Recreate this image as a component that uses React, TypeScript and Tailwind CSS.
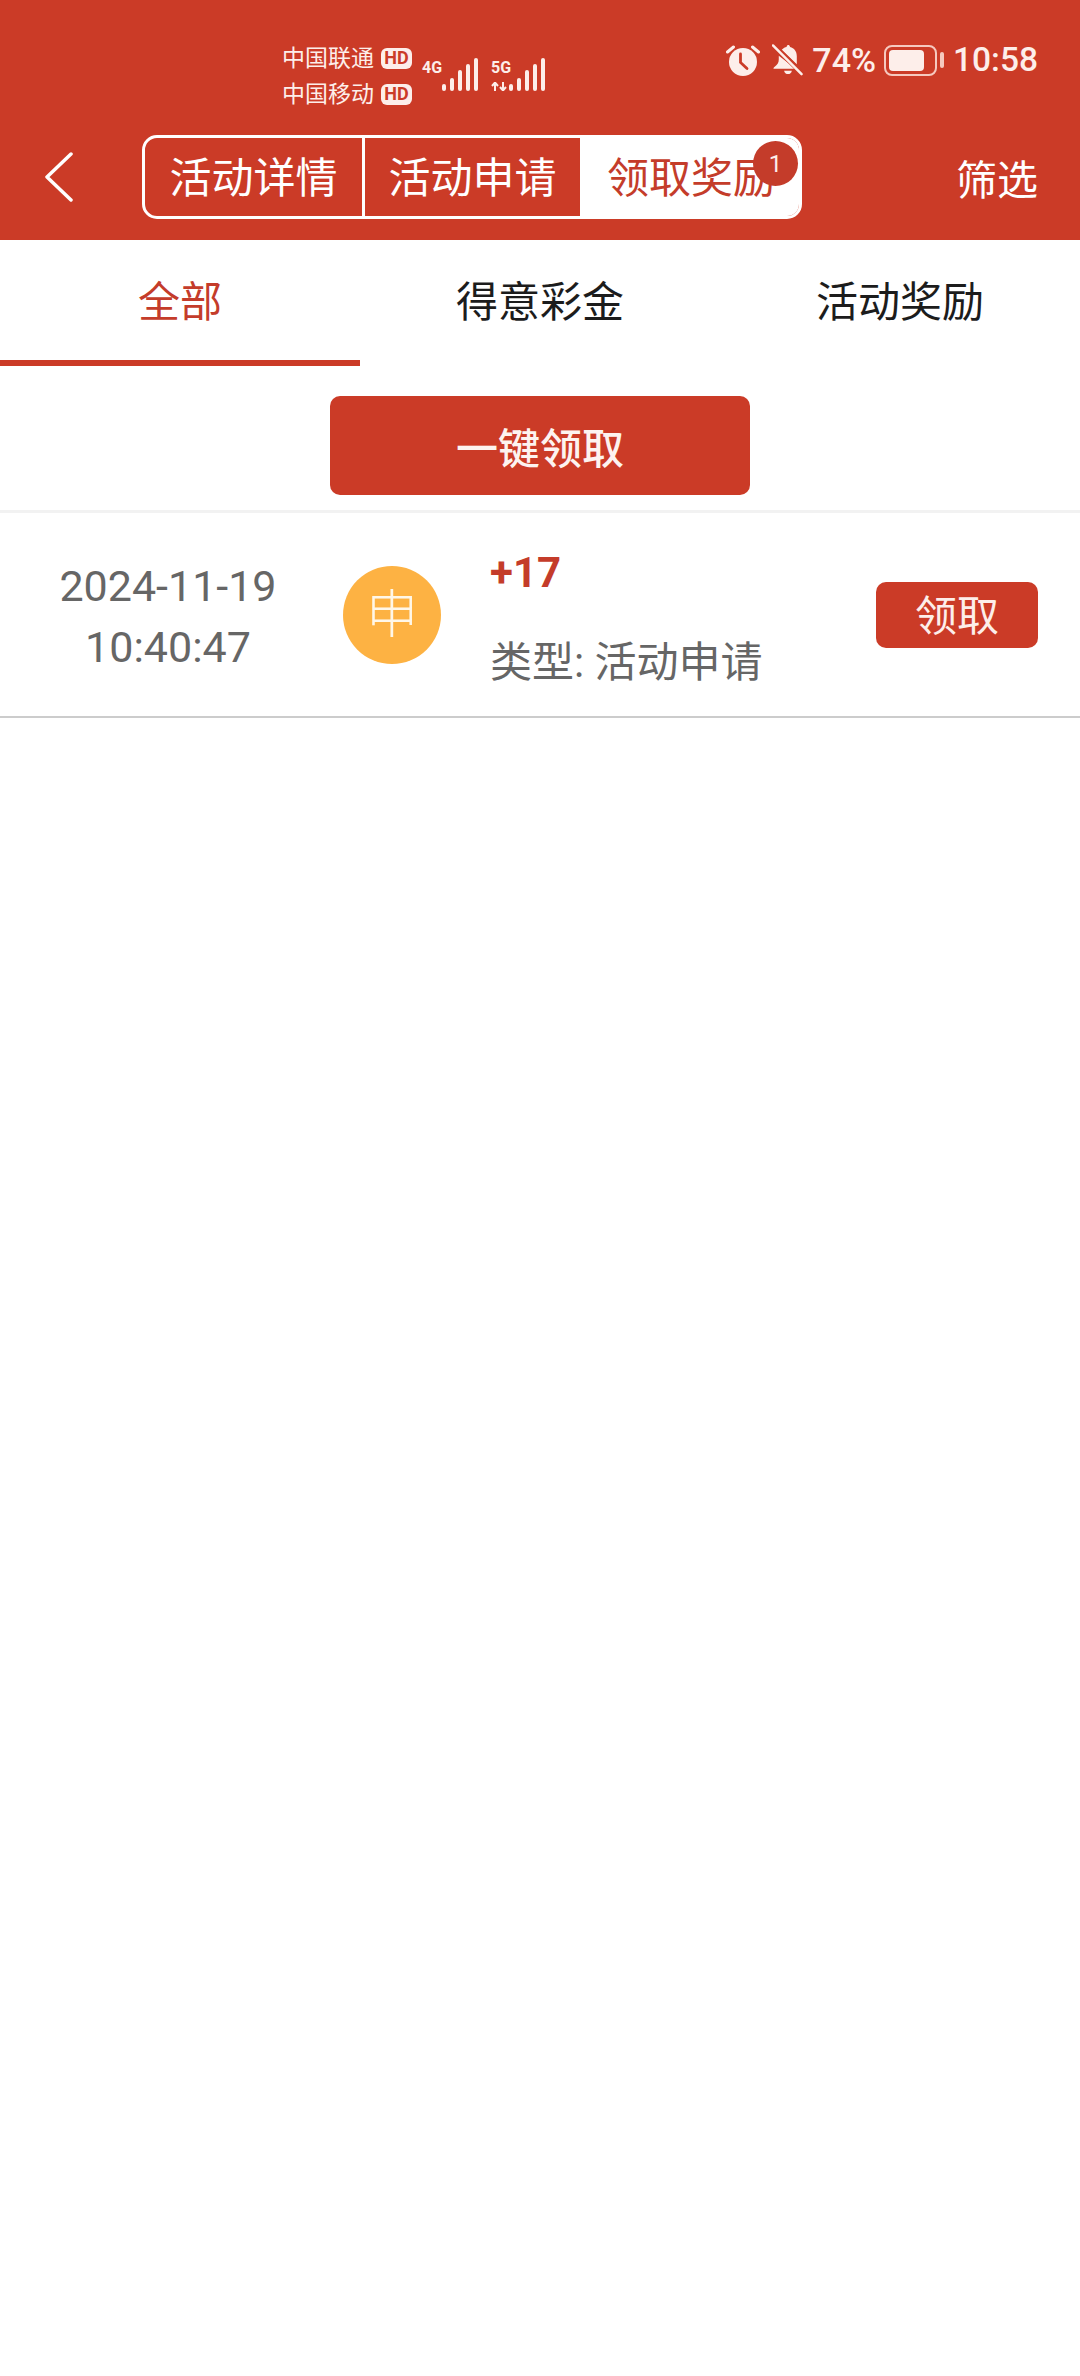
const fontStack = { fontFamily: 'Roboto, "Noto Sans CJK SC", sans-serif' };

function SignalBars() {
  const heights = [7, 13, 21, 27, 33];
  return (
    <div className="flex items-end gap-[4px]">
      {heights.map((h, i) => (
        <div key={i} className="w-[4px] rounded-full bg-[#fdeeea]" style={{ height: h }} />
      ))}
    </div>
  );
}

function HdBadge() {
  return (
    <span className="ml-[7px] flex h-[21px] w-[31px] items-center justify-center rounded-[6px] bg-[#fdeeea] text-[18px] leading-none font-bold text-[#cb3b27]">
      HD
    </span>
  );
}

function DataArrows() {
  return (
    <svg width="17" height="9" viewBox="0 0 17 9" className="text-[#fdeeea]">
      <path d="M4 9V1M1 4l3-3.500L7 4" fill="none" stroke="currentColor" strokeWidth="2" />
      <path d="M12 0v8M9 5l3 3.500L15 5" fill="none" stroke="currentColor" strokeWidth="2" />
    </svg>
  );
}

function AlarmIcon() {
  return (
    <svg width="34" height="31" viewBox="0 0 34 31" className="text-[#fdeeea]">
      <circle cx="17" cy="17" r="14" fill="currentColor" />
      <path d="M14.500 9v8.500l6.500 6" fill="none" stroke="#cb3b27" strokeWidth="2.800" strokeLinecap="round" />
      <path d="M1.500 7 7.500 2M32.500 7 26.500 2" fill="none" stroke="currentColor" strokeWidth="3" strokeLinecap="round" />
    </svg>
  );
}

function MutedBellIcon() {
  return (
    <svg width="31" height="32" viewBox="0 0 32 32" className="text-[#fdeeea]">
      <path
        d="M7 11.500 24.500 25H1.500c0-1 .6-1.600 1.600-2.400C5.600 20.400 7 19 7 15.500ZM10 5.500C11.800 3.500 13.500 2.800 15 2.500 15.400 1 16 .5 16.800.5s1.500.5 1.800 2c4.300 1 7 4.500 7 9.500v8.500Z"
        fill="currentColor"
      />
      <path d="M12.500 27h8c-.4 2.200-2 3.500-4 3.500s-3.600-1.300-4-3.500Z" fill="currentColor" />
      <path d="M2.500 1.500 31 30" stroke="#cb3b27" strokeWidth="5" />
      <path d="M1 1 30.500 30.500" stroke="currentColor" strokeWidth="2.600" strokeLinecap="round" />
    </svg>
  );
}

function BatteryIcon() {
  return (
    <div className="flex items-center gap-[3px]">
      <div className="flex h-[31px] w-[53px] items-center rounded-[8px] border-[2px] border-[#f6c9bf] p-[3px]">
        <div className="h-full w-[35px] rounded-[4px] bg-[#fdeeea]" />
      </div>
      <div className="h-[16px] w-[4px] rounded-full bg-[#f6c9bf]" />
    </div>
  );
}

function StatusBar() {
  return (
    <div className="flex h-[120px] items-center pr-[42px] pl-[282px] text-[#fdeeea]">
      <div className="mt-[32px] flex flex-col gap-[10px]">
        <div className="flex h-[26px] items-center text-[23px] leading-none">
          中国联通
          <HdBadge />
        </div>
        <div className="flex h-[26px] items-center text-[23px] leading-none">
          中国移动
          <HdBadge />
        </div>
      </div>
      <div className="mt-[29px] ml-[10px] flex h-[33px] items-start">
        <span className="mt-[2px] w-[20px] text-[16px] leading-none font-bold">4G</span>
        <SignalBars />
      </div>
      <div className="mt-[29px] ml-[13px] flex h-[33px] items-start">
        <div className="mt-[2px] flex h-[31px] w-[18px] flex-col justify-between">
          <span className="text-[16px] leading-none font-bold">5G</span>
          <DataArrows />
        </div>
        <SignalBars />
      </div>
      <div className="ml-auto flex items-center">
        <AlarmIcon />
        <div className="ml-[12px]">
          <MutedBellIcon />
        </div>
        <span className="ml-[9px] text-[34px] leading-none font-medium">74%</span>
        <div className="ml-[8px]">
          <BatteryIcon />
        </div>
        <span className="ml-[9px] text-[33.500px] leading-none font-medium">10:58</span>
      </div>
    </div>
  );
}

function NavBar() {
  return (
    <div className="flex h-[120px] items-center pb-[6px] text-white">
      <svg width="30" height="50" viewBox="0 0 30 50" className="ml-[44px] shrink-0">
        <polyline points="27,2 3,25 27,48" fill="none" stroke="white" strokeWidth="3.500" strokeLinecap="round" strokeLinejoin="round" />
      </svg>
      <div className="relative ml-[68px] flex h-[84px] w-[660px] shrink-0 rounded-[15px] border-[3px] border-white text-[42px] leading-none">
        <div className="flex w-[217px] items-center justify-center pt-[4px]">活动详情</div>
        <div className="flex w-[218px] items-center justify-center border-l-[3px] border-white pt-[4px]">活动申请</div>
        <div className="flex flex-1 items-center rounded-r-[12px] bg-white pt-[4px] pl-[27px] text-[#c43c2a]">领取奖励</div>
        <div className="absolute top-[3px] left-[608px] flex h-[45px] w-[45px] items-center justify-center rounded-full bg-[#c43c2a] text-[24px] text-[#fdeeea]">
          1
        </div>
      </div>
      <span className="mr-[42px] ml-auto pt-[8px] text-[41px] leading-none">筛选</span>
    </div>
  );
}

function TabBar() {
  const tabs = ['全部', '得意彩金', '活动奖励'];
  return (
    <div className="grid grid-cols-3">
      {tabs.map((tab, i) => (
        <div key={tab} className="flex h-[126px] flex-col">
          <div className={`flex flex-1 items-center justify-center pt-[5px] text-[42px] leading-none ${i === 0 ? 'text-[#c43c2a]' : 'text-[#1c1c1c]'}`}>
            {tab}
          </div>
          <div className={`h-[6px] ${i === 0 ? 'bg-[#cb3b27]' : 'bg-white'}`} />
        </div>
      ))}
    </div>
  );
}

function RewardRow() {
  return (
    <div className="flex h-[205px] items-center border-b-[2px] border-[#cccccc]">
      <div className="w-[334px] shrink-0 pt-[4px] pl-[2px] text-center text-[43px] leading-[61px] text-[#666666]">
        <div>2024-11-19</div>
        <div>10:40:47</div>
      </div>
      <div className="ml-[9px] flex h-[98px] w-[98px] shrink-0 items-center justify-center rounded-full bg-[#fdb243] pt-[2px] text-[52px] leading-none font-light text-[#fff7e8]">
        申
      </div>
      <div className="ml-[49px] flex flex-col gap-[34px] pt-[7px] text-[42px] leading-[56px]">
        <div className="font-bold text-[#c43c2a]">+17</div>
        <div className="text-[#666666]">类型: 活动申请</div>
      </div>
      <button className="mr-[42px] ml-auto flex h-[66px] w-[162px] items-center justify-center rounded-[10px] bg-[#cb3b27] pt-[5px] text-[42px] leading-none text-[#fdeeea]">
        领取
      </button>
    </div>
  );
}

export default function App() {
  return (
    <div className="min-h-[2376px] w-[1080px] bg-white" style={fontStack}>
      <div className="bg-[#cb3b27]">
        <StatusBar />
        <NavBar />
      </div>
      <TabBar />
      <div className="flex h-[147px] justify-center border-b-[3px] border-[#f2f2f2] pt-[30px]">
        <button className="h-[99px] w-[420px] rounded-[10px] bg-[#cb3b27] pt-[9px] text-[42px] leading-none font-medium text-[#fdf3f0]">
          一键领取
        </button>
      </div>
      <RewardRow />
    </div>
  );
}
